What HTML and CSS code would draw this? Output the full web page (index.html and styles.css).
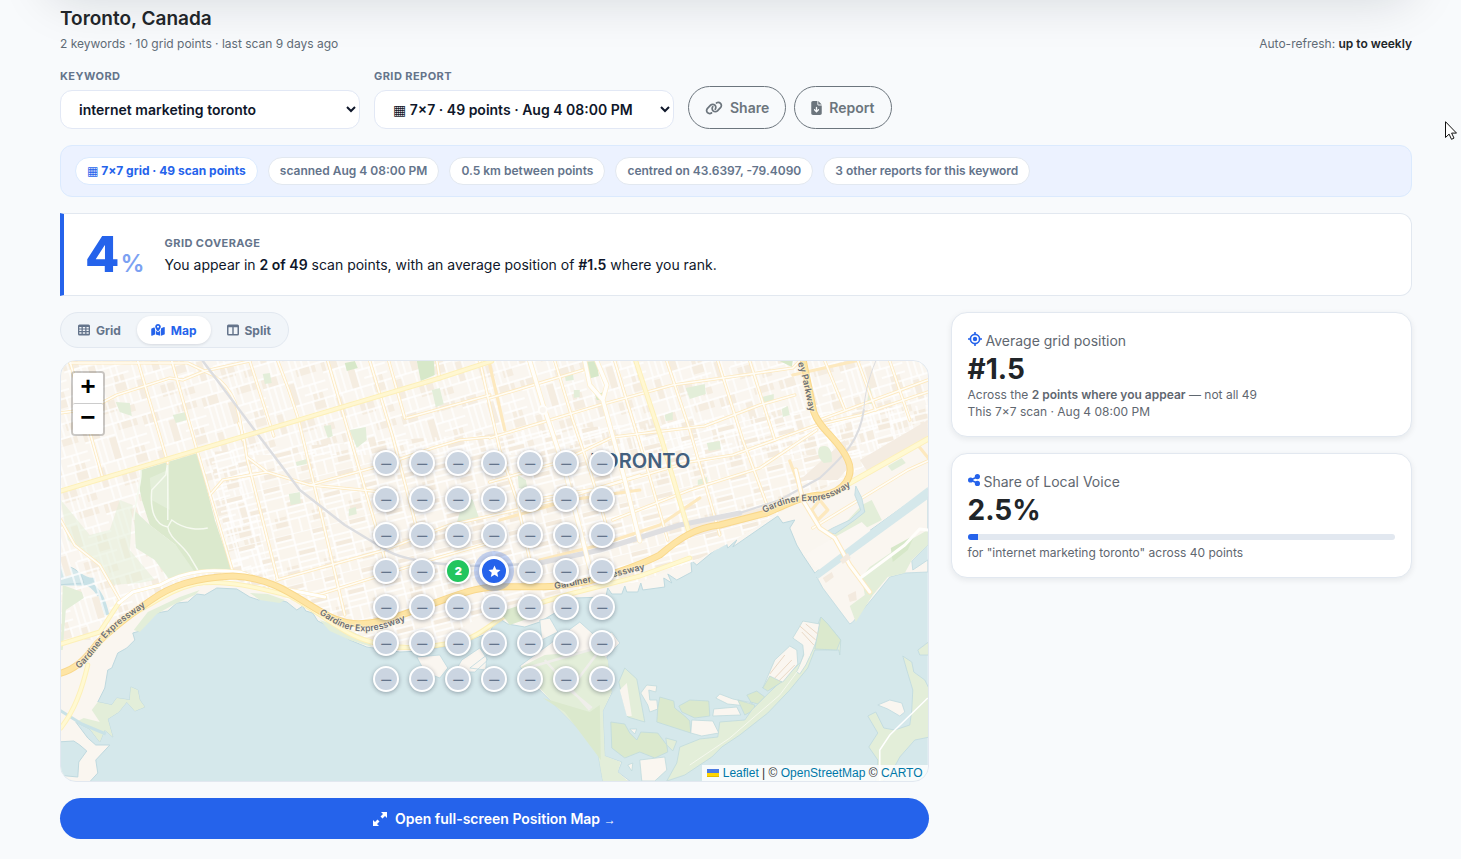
FILE: index.html
```html
<!DOCTYPE html>
<html lang="en">
<head>
<meta charset="utf-8">
<meta name="viewport" content="width=device-width, initial-scale=1">
<title>Toronto, Canada</title>
<link rel="stylesheet" href="styles.css">
</head>
<body>
<div class="topbar-shadow"></div>
<main class="page">
  <header class="heading">
    <div>
      <h1 class="title">Toronto, Canada</h1>
      <p class="meta">2 keywords · 10 grid points · last scan 9 days ago</p>
    </div>
    <p class="meta">Auto-refresh: <strong class="dark">up to weekly</strong></p>
  </header>

  <section class="filters">
    <div class="field">
      <label class="label" for="keyword">Keyword</label>
      <select class="select" id="keyword"><option>internet marketing toronto</option></select>
    </div>
    <div class="field">
      <label class="label" for="report">Grid report</label>
      <select class="select" id="report"><option>▦ 7×7 · 49 points · Aug 4 08:00 PM</option></select>
    </div>
    <div class="actions">
      <button class="btn-outline" type="button">
        <svg class="icon-link" viewBox="0 0 640 512" aria-hidden="true"><path d="M579.800 267.700c56.500-56.500 56.500-148 0-204.500c-50-50-128.800-56.500-186.300-15.400l-1.600 1.100c-14.400 10.300-17.700 30.300-7.400 44.600s30.300 17.700 44.600 7.400l1.600-1.100c32.100-22.900 76-19.300 103.800 8.600c31.500 31.500 31.500 82.500 0 114L422.300 334.800c-31.500 31.500-82.500 31.500-114 0c-27.900-27.900-31.500-71.800-8.600-103.800l1.100-1.600c10.300-14.400 6.900-34.400-7.400-44.600s-34.400-6.900-44.600 7.400l-1.100 1.600C206.500 251.200 213 330 263 380c56.500 56.500 148 56.500 204.500 0L579.800 267.700zM60.200 244.300c-56.500 56.500-56.500 148 0 204.500c50 50 128.800 56.500 186.300 15.400l1.600-1.100c14.400-10.300 17.700-30.300 7.400-44.600s-30.300-17.700-44.600-7.400l-1.600 1.100c-32.100 22.900-76 19.300-103.800-8.600C74 372 74 321 105.500 289.500L217.700 177.200c31.500-31.500 82.500-31.500 114 0c27.900 27.900 31.500 71.800 8.600 103.900l-1.100 1.600c-10.300 14.400-6.900 34.400 7.400 44.600s34.400 6.900 44.600-7.400l1.100-1.600C433.500 260.800 427 182 377 132c-56.500-56.500-148-56.500-204.500 0L60.200 244.300z"/></svg>
        Share
      </button>
      <button class="btn-outline" type="button">
        <svg class="icon-file" viewBox="0 0 384 512" aria-hidden="true"><path d="M64 0C28.700 0 0 28.700 0 64V448c0 35.300 28.700 64 64 64H320c35.300 0 64-28.700 64-64V160H256c-17.700 0-32-14.300-32-32V0H64zM256 0V128H384L256 0zM216 232V334.100l31-31c9.400-9.400 24.600-9.400 33.900 0s9.400 24.600 0 33.900l-72 72c-9.400 9.400-24.600 9.400-33.900 0l-72-72c-9.400-9.400-9.400-24.600 0-33.900s24.600-9.400 33.900 0l31 31V232c0-13.300 10.700-24 24-24s24 10.700 24 24z"/></svg>
        Report
      </button>
    </div>
  </section>

  <section class="facts">
    <span class="chip chip-main">▦ 7×7 grid · 49 scan points</span>
    <span class="chip">scanned Aug 4 08:00 PM</span>
    <span class="chip">0.5 km between points</span>
    <span class="chip">centred on 43.6397, -79.4090</span>
    <span class="chip">3 other reports for this keyword</span>
  </section>

  <section class="coverage">
    <div class="coverage-value">4<span class="coverage-unit">%</span></div>
    <div>
      <h2 class="label">Grid coverage</h2>
      <p class="coverage-text">You appear in <strong>2 of 49</strong> scan points, with an average position of <strong>#1.5</strong> where you rank.</p>
    </div>
  </section>

  <div class="columns">
    <section class="map-column">
      <div class="tabs">
        <button class="tab" type="button"><svg class="icon-tab" viewBox="0 0 12 12" aria-hidden="true"><path fill-rule="evenodd" d="M1.500.5h9A1.500 1.500 0 0 1 12 2v8a1.500 1.500 0 0 1-1.500 1.500h-9A1.500 1.500 0 0 1 0 10V2A1.500 1.500 0 0 1 1.500.5zM1.300 3v1.400h2.200V3zm3.500 0v1.400h2.400V3zm3.700 0v1.400h2.200V3zM1.300 5.600V7h2.200V5.600zm3.500 0V7h2.400V5.600zm3.700 0V7h2.200V5.600zM1.300 8.300v1.500h2.200V8.300zm3.500 0v1.500h2.400V8.300zm3.700 0v1.500h2.200V8.300z"/></svg>Grid</button>
        <button class="tab tab-active" type="button"><svg class="icon-map" viewBox="0 0 576 512" aria-hidden="true"><path fill-rule="evenodd" d="M408 120c0 54.600-73.100 151.900-105.200 192c-7.700 9.600-22 9.600-29.600 0C241.100 271.900 168 174.600 168 120C168 53.700 221.700 0 288 0s120 53.700 120 120zm8 80.400c3.500-6.900 6.700-13.800 9.600-20.600c.5-1.200 1-2.500 1.500-3.700l116-46.400C558.900 123.400 576 135 576 152V422.800c0 9.800-6 18.600-15.100 22.300L416 503V200.400zM137.600 138.300c2.400 14.100 7.200 28.300 12.800 41.500c2.900 6.800 6.100 13.700 9.600 20.600V451.800L32.900 502.700C17.100 509 0 497.400 0 480.400V209.600c0-9.800 6-18.600 15.100-22.300l122.600-49zM327.800 332c13.900-17.400 35.700-45.700 56.200-77V504.300L192 449.400V255c20.500 31.300 42.300 59.600 56.200 77c20.500 25.600 59.100 25.600 79.600 0zM288 160a44 44 0 1 0 0-88 44 44 0 1 0 0 88z"/></svg>Map</button>
        <button class="tab" type="button"><svg class="icon-tab" viewBox="0 0 12 12" aria-hidden="true"><path fill-rule="evenodd" d="M1.500.5h9A1.500 1.500 0 0 1 12 2v8a1.500 1.500 0 0 1-1.500 1.500h-9A1.500 1.500 0 0 1 0 10V2A1.500 1.500 0 0 1 1.500.5zM1.500 3.200V10h3.800V3.200zm5.200 0V10h3.800V3.200z"/></svg>Split</button>
      </div>

      <div class="map">
        <svg class="map-canvas" viewBox="61 361 867 420" preserveAspectRatio="xMidYMid slice" role="img" aria-label="Map of Toronto">
          <defs>
            <pattern id="blocks" width="62" height="74" patternUnits="userSpaceOnUse" patternTransform="translate(61 361) rotate(-16.600)">
              <path fill="#f5ede1" d="M0 2h18v9H0zM22 14h9v22h-9zM36 2h20v7H36zM4 40h8v20H4zM44 30h12v16H44zM26 52h14v12H26zM48 60h10v9H48z"/>
              <path stroke="#fff" stroke-width="1.300" fill="none" d="M0 1h62M0 12h31M31 20h31M0 37h62M20 49h42M0 61h62M38 29h24M5 1v36M11 12v25M17 1v36M23 12v25M32 0v74M39 1v19M45 20v17M51 1v36M57 37v24M4 37v24M12 37v37M19 49v25M26 37v12M44 37v37M38 61v13M51 49v25"/>
            </pattern>
            <pattern id="rows" width="38" height="50" patternUnits="userSpaceOnUse" patternTransform="translate(300 480) rotate(-14)">
              <path fill="#f4ebde" d="M0 0h16v5H0zM20 18h16v5H20zM4 32h12v12H4z"/>
              <path stroke="#fff" stroke-width="1.400" fill="none" d="M0 0h38M0 6h18M0 12h38M18 18h20M0 24h38M18 30h20M0 36h38M0 43h18M18 0v50M37 0v50M28 36v14M8 24v12"/>
            </pattern>
            <clipPath id="city"><path d="M61 361H928V430L850 475 800 500 735 540 697 560 640 582 573 590 490 610 447 638 400 648 355 634 297 603 237 580 177 590 145 610 100 640 61 640Z"/></clipPath>
            <path id="road-west" d="M79 669C95 655 100 643 112 632C125 619 137 614 152 601"/>
            <path id="road-mid" d="M319 614C333 622 340 629 357 631C375 633 390 627 418 616"/>
            <path id="road-centre" d="M555 589C580 585 615 577 655 567"/>
            <path id="road-east" d="M764 513C785 503 795 501 810 501C828 501 840 494 860 480"/>
            <path id="road-north" d="M798 363C804 380 805 392 812 422"/>
          </defs>

          <rect x="61" y="361" width="867" height="420" fill="#d5e8eb"/>

          <!-- mainland -->
          <path fill="#faf6f0" stroke="#bfd9df" stroke-width="1" d="M55 355H935V484L868 532 815 573 803 555 797 545 790 528 795 520 783 523 778 516 733 547 737 540 728 548 726 541 697 565 691 560 692 572 677 580 668 574 672 583 664 578 665 587 643 590 641 583 638 592 627 592 625 586 622 594 612 594 608 588 606 597 575 598 560 610 540 622 525 627 508 624 497 617 490 633 470 640 447 646 420 651 400 652 367 647 350 640 333 628 318 621 313 613 306 611 303 606 297 610 287 602 276 599 267 596 259 600 250 597 237 589 217 588 205 595 197 594 188 602 177 603 168 611 157 613 145 623 140 631 133 633 135 640 127 648 118 653 112 668 108 670 105 688 98 702 112 705 117 698 130 700 131 687 138 690 140 700 145 707 135 711 127 702 119 712 108 719 113 737 105 730 100 742 90 729 76 722 88 738 96 745 110 745 96 760 98 773 87 785H55Z"/>
          <path fill="#e3eed9" d="M98 702L112 705 117 698 130 700 131 687 138 690 140 700 145 707 135 711 127 702 119 712 108 719 113 737 105 730 100 742 90 729 76 722 84 718 100 722 92 710Z"/>
          <path fill="#d5e8eb" stroke="#bfd9df" d="M57 742L74 741 80 745 87 751 79 762 78 777 57 775Z"/>
          <path fill="none" stroke="#c9e2e7" stroke-width="5" d="M58 570C75 564 80 582 95 580M58 583H88C100 590 104 602 107 615"/>
          <path fill="none" stroke="#c9e2e7" stroke-width="3" d="M58 709L82 724 106 734"/>
          <path fill="#d5e8eb" stroke="#bfd9df" d="M57 567C70 563 82 571 84 583L57 585Z"/>

          <!-- street texture -->
          <g clip-path="url(#city)">
            <rect x="61" y="361" width="867" height="290" fill="url(#blocks)"/>
            <path fill="#faf5ed" d="M245 455L930 455V650H285Z"/>
            <path fill="url(#rows)" d="M210 452L930 405V650H285L233 575Z"/>
          </g>
          <path fill="#f4ece2" d="M860 460L928 420V440L870 475ZM690 538L760 518 765 507 690 525ZM800 480L845 440 850 466 838 480Z"/>

          <!-- parks -->
          <g fill="#e3eed9">
            <path d="M61 500L68 540 95 560 110 585 140 583 155 580 130 550 133 505 120 500 110 530 90 535Z" opacity=".55"/>
            <path d="M116 402L130 403 132 416 120 412ZM173 415L186 412 187 420 176 423ZM263 374L270 373 272 383 265 384ZM324 426L331 425 333 436 328 438ZM350 430L366 427 367 440 357 448ZM432 390L440 388 444 404 436 407ZM289 494L300 492 301 503 291 505ZM296 462L307 459 307 464 297 466ZM349 509L356 507 357 514 349 516Z"/>
            <path d="M686 388L705 384 706 394 690 399ZM762 397L774 394 774 402 763 403ZM782 409L788 406 790 415 783 417ZM565 375L573 373 574 380 566 381ZM574 390L580 390 580 397 574 398ZM665 415L673 412 673 420 666 421ZM707 443L720 441 721 449 709 451ZM698 480L707 477 708 483 698 485ZM465 495L473 500 480 520 457 523ZM518 475L526 480 528 490 519 488ZM870 385L874 404 867 404ZM820 447C830 443 833 452 832 462L824 463C818 458 817 452 820 447ZM888 466L902 458 906 463 892 471Z"/>
            <path d="M63 585L82 592 84 598 66 610 63 650 61 650ZM148 612L165 604 180 597 200 590 195 595 175 604 157 614 140 632 134 630ZM250 593L268 594 285 600 280 603 260 600ZM320 620L345 628 370 640 372 647 350 640 330 631Z"/>
            <path d="M862 505L872 500 882 520 862 530 848 540 830 540Z"/>
          </g>
          <path fill="#dbe9cd" d="M141 470L198 453 215 520 232 570 210 572 190 572 176 545 150 525 142 500 140 490Z"/>
          <path fill="#e3eed9" d="M134 510L150 525 176 545 195 572 170 580 155 560 136 548ZM150 478L168 470 170 510 152 500Z"/>
          <path fill="none" stroke="#f6faf0" stroke-width="1.500" d="M168 462L166 475 152 490C150 510 155 525 168 527L172 520C185 530 200 530 208 528M168 463V520M168 527C170 540 185 545 192 560L198 570M141 470C143 480 135 500 134 520"/>
          <path fill="#d7e8c9" d="M345 363L355 361 358 368 347 371ZM417 361H434L435 375 421 381ZM585 362L597 361 599 376 588 379ZM595 394L605 392 602 400 597 400ZM780 361H793L792 367Z"/>

          <!-- local arterials -->
          <g fill="none" stroke-linecap="round" stroke-linejoin="round">
            <g stroke="#fde9bf" stroke-width="3.200">
              <path d="M70 361L103 478M138 361L168 463M172 361L198 453 233 572M250 361L274 436M239 423C247 440 245 455 249 465L278 580M278 361L289 390 298 417 322 517 345 615M328 361L354 450 380 540 385 560M370 361L393 437 420 540M389 361L405 418M437 361L440 379M480 361L500 450 517 500 530 560M490 365L505 430M555 361L573 420 590 470 608 530M615 361L645 460 668 540M667 361L690 430 720 535M718 361L743 440 768 507M750 361L775 440M790 461L803 495M825 361L845 410M858 361L876 410M890 361L910 420M930 460L918 445"/>
              <path d="M61 413L90 409 117 395 170 378 183 380 205 371 250 361M70 363H188L213 375C235 390 240 410 243 440M247 457L267 472 310 485 383 492M210 495L223 480 267 472M310 485L383 465 433 448 460 440 490 437M407 418L490 395M61 520L75 545 100 565 120 600M277 580L385 550 450 525 560 500 640 475M318 595L350 585 430 560 500 540M490 398L583 370M490 438L600 405 673 385 793 368 800 361M490 482L560 462 613 437 705 426 760 405 795 395M533 500L600 488 690 462 733 455 817 425 860 415 928 392M613 520L690 490 760 468 817 430M793 375L860 360M820 420L928 380M850 482L928 440M500 520L570 500 640 490M540 560L600 545 660 525 700 498"/>
              <path d="M813 528L908 470 930 460M820 500L828 510 818 520 812 510ZM862 580L905 540 920 528 928 529"/>
            </g>
            <g stroke="#fffdf7" stroke-width="1.700">
              <path d="M70 361L103 478M138 361L168 463M172 361L198 453 233 572M250 361L274 436M239 423C247 440 245 455 249 465L278 580M278 361L289 390 298 417 322 517 345 615M328 361L354 450 380 540 385 560M370 361L393 437 420 540M389 361L405 418M437 361L440 379M480 361L500 450 517 500 530 560M555 361L573 420 590 470 608 530M615 361L645 460 668 540M667 361L690 430 720 535M718 361L743 440 768 507M750 361L775 440M825 361L845 410M858 361L876 410M890 361L910 420"/>
              <path d="M61 413L90 409 117 395 170 378 183 380 205 371 250 361M70 363H188L213 375C235 390 240 410 243 440M247 457L267 472 310 485 383 492M210 495L223 480 267 472M310 485L383 465 433 448 460 440 490 437M407 418L490 395M61 520L75 545 100 565 120 600M277 580L385 550 450 525 560 500 640 475M318 595L350 585 430 560 500 540M490 398L583 370M490 438L600 405 673 385 793 368 800 361M490 482L560 462 613 437 705 426 760 405 795 395M533 500L600 488 690 462 733 455 817 425 860 415 928 392M613 520L690 490 760 468 817 430M820 420L928 380M813 528L908 470 930 460M862 580L905 540 920 528 928 529"/>
            </g>

            <!-- railway -->
            <path stroke="#dcdde0" stroke-width="2.500" d="M203 361L257 433 300 490 345 525 383 548C400 560 440 566 490 566L540 563"/>
            <path stroke="#dfdfe1" stroke-width="5" d="M540 563L600 550 680 525 740 513"/>
            <path stroke="#dcdde0" stroke-width="2" d="M740 513L780 500 820 478C845 455 860 440 864 410"/>
            <path stroke="#dcdde0" stroke-width="1" d="M864 410C865 395 868 380 876 361"/>

            <!-- wide avenues -->
            <path stroke="#fdeecb" stroke-width="5" d="M530 361L543 404 565 470 590 568M585 361L590 385 603 400 625 480 640 541M603 400L607 385 597 361"/>
            <path stroke="#fffefb" stroke-width="3.500" d="M530 361L543 404 565 470 590 568M585 361L590 385 603 400 625 480 640 541M603 400L607 385 597 361"/>
            <circle cx="543" cy="410" r="4" fill="#faf6f0" stroke="#fffefb" stroke-width="2"/>
            <path stroke="#fdf0b9" stroke-width="5" d="M61 491L198 450 440 378 492 361M636 361L662 440 690 535"/>
            <path stroke="#fff7d2" stroke-width="3" d="M61 491L198 450 440 378 492 361M636 361L662 440 690 535"/>
            <path stroke="#fdf0b9" stroke-width="6" d="M850 483L928 439"/>
            <path stroke="#fff9d2" stroke-width="4" d="M850 483L928 439"/>
            <path stroke="#fdf0b9" stroke-width="5" d="M61 644L100 632 119 603M61 728C75 710 82 690 88 665M125 618C155 603 170 590 195 584C225 579 260 588 290 596C320 612 340 632 365 640C400 652 430 648 465 640C490 632 500 610 540 603L570 594 640 576 690 558"/>
            <path stroke="#fff9d2" stroke-width="3" d="M61 644L100 632 119 603M61 728C75 710 82 690 88 665M125 618C155 603 170 590 195 584C225 579 260 588 290 596C320 612 340 632 365 640C400 652 430 648 465 640C490 632 500 610 540 603L570 594 640 576 690 558"/>
            <path stroke="#fdedc0" stroke-width="4" d="M119 603L133 592 160 585C190 568 215 570 240 572L290 590 325 597"/>
            <path stroke="#fff" stroke-width="3" d="M119 603L133 592 160 585C190 568 215 570 240 572L290 590 325 597"/>

            <!-- expressway -->
            <path stroke="#f9d88c" stroke-width="7" d="M58 674C75 670 85 660 97 644C112 628 130 615 150 601C172 585 195 578 233 576C275 578 295 597 320 611C340 624 360 631 410 612C450 598 470 588 495 587C530 586 560 590 600 578C625 570 645 563 660 555C680 538 695 528 720 525L767 513C790 503 805 495 823 495C845 492 855 475 848 460C840 440 820 430 814 412L803 358"/>
            <path stroke="#fee5a5" stroke-width="5" d="M58 674C75 670 85 660 97 644C112 628 130 615 150 601C172 585 195 578 233 576C275 578 295 597 320 611C340 624 360 631 410 612C450 598 470 588 495 587C530 586 560 590 600 578C625 570 645 563 660 555C680 538 695 528 720 525L767 513C790 503 805 495 823 495C845 492 855 475 848 460C840 440 820 430 814 412L803 358"/>
          </g>

          <!-- port lands -->
          <g stroke="#bfd9df" stroke-width=".8">
            <path fill="#d5e8eb" d="M856 486L862 498 865 512 855 520 835 534 826 532 833 528 850 520 861 510 855 495Z"/>
            <path fill="#faf6f0" d="M928 497L890 520 817 577 823 588 850 624 853 622 862 611 873 598 890 577 905 573 928 572 928 560 913 570 912 561 928 545Z"/>
          </g>
          <path fill="#fbf7f2" d="M806 554L828 541 862 522 872 532 820 570 814 566Z"/>
          <path fill="#e3eed9" d="M862 577L870 567 905 543 928 530V545L912 560 905 573 888 577 873 595 856 622 850 606 865 595Z"/>
          <path fill="#d7e8c9" d="M891 548L915 535 908 550 893 562Z"/>
          <path fill="#d5e8eb" d="M928 487L815 573 818 579 928 499Z"/>
          <path fill="none" stroke="#fde9bf" stroke-width="5" stroke-linecap="round" stroke-linejoin="round" d="M796 470L803 500 820 528 835 538 850 565 870 592"/>
          <path fill="none" stroke="#fffefb" stroke-width="3" stroke-linecap="round" stroke-linejoin="round" d="M796 470L803 500 820 528 835 538 850 565 870 592M862 577L905 545 920 529 928 530"/>
          <path fill="#f3eadf" d="M823 578L832 572 834 577 826 583ZM848 595L856 591 857 600 850 602ZM840 560L848 553 851 558 843 564Z"/>

          <!-- waterfront piers and Ontario Place -->
          <path fill="#faf6f0" stroke="#bfd9df" stroke-width=".8" d="M540 620L550 618 558 632 542 640ZM520 666L580 622 600 640 612 632 620 643 607 657 612 693 603 711 605 756 622 762 618 772 630 781H603L598 752 580 730 557 707 530 680ZM417 657L440 655 448 668 440 678 425 672ZM462 660L480 648 488 660 475 672 455 672ZM470 668L487 655 486 670ZM448 672L460 676 452 683Z"/>
          <path fill="#e3eed9" d="M521 667L545 655 600 650 608 660 612 692 603 711 605 756 621 762 618 772 628 781H603L598 752 580 730 557 707Z"/>
          <path fill="#dbe9cd" d="M543 698L590 712 600 705 601 760 565 712ZM500 612L518 606 530 618 510 625Z"/>
          <path fill="none" stroke="#efeeea" stroke-width="2.500" d="M524 669L607 645M545 660L590 710M600 650L570 690 592 708"/>

          <!-- Toronto Islands -->
          <g stroke="#c0dadd" stroke-width=".8">
            <path fill="#e3eed9" d="M625 668L637 679 640 695 645 722 628 717 622 695 619 682Z"/>
            <path fill="#f9f5ee" stroke="none" d="M620 690L627 683 632 716 627 716Z"/>
            <path fill="#f9f5ee" d="M641 693L647 685 657 686 656 692 649 690 650 700 657 700 658 709 650 712 648 705Z"/>
            <path fill="#dbe9cd" d="M660 697L674 701 675 708 685 716 690 721 691 733 657 722 658 708Z"/>
            <path fill="#dbe9cd" d="M679 706L690 700 709 701 710 716 695 718 682 712Z"/>
            <path fill="#faf6f0" d="M716 698L720 694 733 699 753 703 747 706 728 704ZM714 709L737 707 741 715 713 716Z"/>
            <path fill="#dbe9cd" d="M747 695L757 691 765 697 758 704 751 702ZM738 700L755 705 754 710 745 715Z"/>
            <path fill="#dbe9cd" d="M611 722L625 724 630 733 637 740 641 732 658 733 667 745 668 752 655 758 640 752 625 758 612 748Z"/>
            <path fill="#e3eed9" d="M667 781L677 763 680 747 700 739 718 737 720 722 745 720 752 710 770 692 788 675 802 661 806 645 815 632 821 617 828 624 841 640 840 655 839 650 815 650 808 668 790 690 768 713 740 735 722 747 712 757 700 765 685 775Z"/>
            <path fill="#faf6f0" d="M799 628L803 621 820 624 817 640 813 650 806 665 800 674 797 672 804 655 803 645 793 638Z"/>
            <path fill="#faf6f0" d="M790 646L797 650 798 664 783 682 770 678 763 688 775 660Z"/>
            <path fill="#dbe9cd" d="M821 617L828 624 841 640 837 650 815 649ZM763 688L770 676 782 682 768 691Z"/>
            <path fill="#faf6f0" d="M640 760L665 757 667 770 655 781H642ZM628 765L633 763 632 771ZM692 720L713 721 719 733 702 736 691 733ZM630 729L637 729 635 734Z"/>
            <path fill="#e3eed9" d="M666 738L677 741 673 751 667 745Z"/>
          </g>
          <path fill="none" stroke="#ead9c6" stroke-width="1" d="M770 674L785 655M775 678L792 660M779 681L795 665M800 626L816 640M802 632L814 645M806 624L818 634"/>
          <path fill="none" stroke="#f5f8ee" stroke-width="1" d="M690 765L730 738 780 695 810 655"/>

          <!-- Leslie Street Spit -->
          <path fill="#e3eed9" stroke="#bfd9df" stroke-width=".8" d="M930 641L918 650 920 655 930 655ZM903 656L912 662 914 672 925 680 930 690V737L915 740 900 757 893 770 880 785 876 781 878 760 869 747 878 733 868 716 876 712 884 728 895 730 910 725 912 710 913 690 907 670Z"/>
          <path fill="#faf6f0" stroke="#bfd9df" stroke-width=".8" d="M878 705L890 700 902 703 905 712 900 716 888 709Z"/>
          <path fill="none" stroke="#fff" stroke-width="1.500" d="M928 698L890 735 880 750V781"/>

          <g class="road-name">
            <text><textPath href="#road-west">Gardiner Expressway</textPath></text>
            <text><textPath href="#road-mid">Gardiner Expressway</textPath></text>
            <text><textPath href="#road-centre">Gardiner Expressway</textPath></text>
            <text><textPath href="#road-east">Gardiner Expressway</textPath></text>
            <text><textPath href="#road-north">ey Parkway</textPath></text>
          </g>
          <text class="city-name" x="591" y="468">TORONTO</text>
        </svg>

        <div class="pins">
          <span class="pin">—</span><span class="pin">—</span><span class="pin">—</span><span class="pin">—</span><span class="pin">—</span><span class="pin">—</span><span class="pin">—</span>
          <span class="pin">—</span><span class="pin">—</span><span class="pin">—</span><span class="pin">—</span><span class="pin">—</span><span class="pin">—</span><span class="pin">—</span>
          <span class="pin">—</span><span class="pin">—</span><span class="pin">—</span><span class="pin">—</span><span class="pin">—</span><span class="pin">—</span><span class="pin">—</span>
          <span class="pin">—</span><span class="pin">—</span><span class="pin pin-ranked">2</span><span class="pin pin-home"><svg class="icon-star" viewBox="0 0 24 24" aria-hidden="true"><path d="M12 1l3.200 7.300 7.800.8-5.900 5.300 1.700 7.800L12 18.200l-6.800 4 1.700-7.800L1 9.100l7.800-.8z"/></svg></span><span class="pin">—</span><span class="pin">—</span><span class="pin">—</span>
          <span class="pin">—</span><span class="pin">—</span><span class="pin">—</span><span class="pin">—</span><span class="pin">—</span><span class="pin">—</span><span class="pin">—</span>
          <span class="pin">—</span><span class="pin">—</span><span class="pin">—</span><span class="pin">—</span><span class="pin">—</span><span class="pin">—</span><span class="pin">—</span>
          <span class="pin">—</span><span class="pin">—</span><span class="pin">—</span><span class="pin">—</span><span class="pin">—</span><span class="pin">—</span><span class="pin">—</span>
        </div>

        <div class="zoom">
          <button class="zoom-btn" type="button" aria-label="Zoom in">+</button>
          <button class="zoom-btn" type="button" aria-label="Zoom out">−</button>
        </div>

        <div class="credit">
          <a href="#leaflet"><svg class="icon-flag" viewBox="0 0 12 8" aria-hidden="true"><path fill="#4c7be1" d="M0 0h12v4H0z"/><path fill="#ffd500" d="M0 4h12v3H0z"/><path fill="#e0bc00" d="M0 7h12v1H0z"/></svg> Leaflet</a> | © <a href="#osm">OpenStreetMap</a> © <a href="#carto">CARTO</a>
        </div>
      </div>

      <a class="open-map" href="#position-map">
        <svg class="icon-expand" viewBox="0 0 14 14" aria-hidden="true"><path d="M8 0h6v6l-2-2-2.500 2.500-2-2L10 2zM6 14H0V8l2 2 2.500-2.500 2 2L4 12z"/></svg>
        <span>Open full-screen Position Map <span class="arrow">→</span></span>
      </a>
    </section>

    <aside class="stats">
      <section class="card">
        <h3 class="card-title"><svg class="icon-stat" viewBox="0 0 14 14" aria-hidden="true"><circle cx="7" cy="7" r="4.600" fill="none" stroke="currentColor" stroke-width="1.700"/><circle cx="7" cy="7" r="2.200"/><path d="M6.200 0h1.600v3H6.200zM6.200 11h1.600v3H6.200zM0 6.200h3v1.600H0zM11 6.200h3v1.600h-3z"/></svg> Average grid position</h3>
        <div class="card-value">#1.5</div>
        <p class="card-note">Across the <strong>2 points where you appear</strong> — not all 49</p>
        <p class="card-note">This 7×7 scan · Aug 4 08:00 PM</p>
      </section>
      <section class="card">
        <h3 class="card-title"><svg class="icon-share" viewBox="0 0 12 12" aria-hidden="true"><path d="M2.700 6l6.800-3.300M2.700 6l6.800 3.300" stroke="currentColor" stroke-width="1.600"/><circle cx="2.600" cy="6" r="2.600"/><circle cx="9.400" cy="2.600" r="2.600"/><circle cx="9.400" cy="9.400" r="2.600"/></svg> Share of Local Voice</h3>
        <div class="card-value">2.5%</div>
        <div class="bar"><div class="bar-fill" style="width:2.500%"></div></div>
        <p class="card-note">for "internet marketing toronto" across 40 points</p>
      </section>
    </aside>
  </div>
</main>
<svg class="cursor" viewBox="0 0 12 19" aria-hidden="true"><path d="M.5.700v15.800l3.600-3.400 2.400 5.200 2.500-1.200-2.400-5h4.900z" fill="#fff" stroke="#111" stroke-width="1"/></svg>
</body>
</html>
```

FILE: styles.css
```css
* {
  box-sizing: border-box;
}

body {
  margin: 0;
  background: #f8fafc;
  color: #212529;
  font-family: Inter, "DejaVu Sans", sans-serif;
  font-size: 14px;
}

h1, h2, h3, p {
  margin: 0;
}

strong {
  font-weight: 600;
}

svg {
  fill: currentColor;
  flex: none;
}

button {
  font-family: inherit;
  cursor: pointer;
}

.topbar-shadow {
  position: absolute;
  top: -80px;
  left: 48px;
  right: 48px;
  height: 70px;
  border-radius: 24px;
  box-shadow: 0 10px 50px rgba(15, 20, 36, 0.15);
}

.page {
  position: relative;
  padding: 6px 49px 20px 60px;
}

.heading {
  display: flex;
  justify-content: space-between;
  align-items: flex-end;
}

.title {
  font-size: 19px;
  font-weight: 600;
  line-height: 26px;
}

.meta {
  margin-top: 3px;
  color: #5f6b76;
  font-size: 12px;
  line-height: 18px;
}

.dark {
  color: #212529;
}

.label {
  display: block;
  color: #64748b;
  font-size: 11px;
  font-weight: 700;
  line-height: 16px;
  letter-spacing: 0.04em;
  text-transform: uppercase;
}

.filters {
  display: flex;
  flex-wrap: wrap;
  align-items: flex-end;
  gap: 14px;
  margin-top: 15px;
}

.field {
  width: 300px;
}

.select {
  width: 100%;
  height: 39px;
  margin-top: 6px;
  padding: 0 0 0 14px;
  border: 1px solid #e2e8f5;
  border-radius: 12px;
  background-color: #fff;
  color: #0f172a;
  font: 600 14px Inter, "DejaVu Sans", sans-serif;
}

.actions {
  display: flex;
  gap: 8px;
}

.btn-outline {
  display: flex;
  align-items: center;
  gap: 7px;
  height: 43px;
  padding: 0 16px;
  border: 1px solid #6c757d;
  border-radius: 22px;
  background: none;
  color: #6c757d;
  font-size: 14px;
  font-weight: 600;
}

.icon-link {
  width: 18px;
  height: 14px;
}

.icon-file {
  width: 11px;
  height: 14px;
}

.facts {
  display: flex;
  flex-wrap: wrap;
  gap: 10px;
  margin-top: 16px;
  padding: 11px 14px;
  border: 1px solid #dbeafe;
  border-radius: 12px;
  background: #ecf2ff;
}

.chip {
  padding: 5px 11px;
  border: 1px solid #e2e8f0;
  border-radius: 14px;
  background: #fff;
  color: #64748b;
  font-size: 12px;
  font-weight: 600;
  line-height: 16px;
}

.chip-main {
  border-color: #dbeafe;
  color: #2563eb;
  font-weight: 700;
}

.coverage {
  display: flex;
  align-items: center;
  gap: 20px;
  margin-top: 16px;
  padding: 16px 21px;
  border: 1px solid #e2e8f0;
  border-left: 4px solid #2563eb;
  border-radius: 0 12px 12px 0;
  background: #fff;
}

.coverage-value {
  display: flex;
  align-items: baseline;
  gap: 1px;
  height: 49px;
  color: #2563eb;
  font-size: 50px;
  font-weight: 800;
  line-height: 49px;
}

.coverage-unit {
  font-size: 24px;
  font-weight: 600;
  opacity: 0.6;
}

.coverage-text {
  margin-top: 4px;
  color: #0f172a;
  font-size: 14px;
  line-height: 20px;
}

.columns {
  display: grid;
  grid-template-columns: minmax(0, 32fr) minmax(0, 17fr);
  gap: 22px;
  margin-top: 16px;
}

.tabs {
  display: inline-flex;
  gap: 2px;
  padding: 3px;
  border: 1px solid #e2e8f0;
  border-radius: 18px;
  background: #f1f5f9;
  vertical-align: top;
}

.tab {
  display: flex;
  align-items: center;
  gap: 6px;
  height: 28px;
  padding: 0 14px;
  border: 0;
  border-radius: 14px;
  background: none;
  color: #64748b;
  font-size: 12px;
  font-weight: 700;
}

.tab-active {
  background: #fff;
  color: #2563eb;
  box-shadow: 0 1px 3px rgba(15, 23, 42, 0.12);
}

.icon-tab {
  width: 12px;
  height: 12px;
}

.icon-map {
  width: 14px;
  height: 12px;
}

.map {
  position: relative;
  display: grid;
  place-items: center;
  height: 422px;
  margin-top: 12px;
  border: 1px solid #e2e8f0;
  border-radius: 16px;
  overflow: hidden;
}

.map-canvas {
  grid-area: 1 / 1;
  width: 100%;
  height: 420px;
}

.road-name {
  fill: #6d7076;
  stroke: #fdf3d8;
  stroke-width: 2px;
  stroke-opacity: 0.5;
  paint-order: stroke;
  font: 600 9px Inter, sans-serif;
}

.city-name {
  fill: #43607f;
  font: 600 20px Inter, sans-serif;
}

.pins {
  grid-area: 1 / 1;
  display: grid;
  grid-template-columns: repeat(7, 36px);
  grid-auto-rows: 36px;
  place-items: center;
  z-index: 1;
}

.pin {
  display: flex;
  align-items: center;
  justify-content: center;
  width: 26px;
  height: 26px;
  border: 2px solid #fff;
  border-radius: 50%;
  background: #cbd5e1;
  color: #64748b;
  font-size: 10px;
  font-weight: 700;
  line-height: 12px;
  box-shadow: 0 1px 4px rgba(15, 23, 42, 0.35);
}

.pin-ranked {
  background: #22c55e;
  color: #fff;
  font-size: 11px;
  font-weight: 900;
}

.pin-home {
  width: 30px;
  height: 30px;
  border-width: 3px;
  background: #2563eb;
  color: #fff;
  box-shadow: 0 0 0 5px rgba(37, 99, 235, 0.25), 0 2px 6px rgba(15, 23, 42, 0.4);
}

.icon-star {
  width: 13px;
  height: 13px;
}

.zoom {
  position: absolute;
  top: 10px;
  left: 10px;
  z-index: 2;
  border: 2px solid rgba(0, 0, 0, 0.2);
  border-radius: 4px;
  background-clip: padding-box;
}

.zoom-btn {
  display: block;
  width: 30px;
  height: 30px;
  padding: 0;
  border: 0;
  border-radius: 2px;
  background: #fff;
  color: #000;
  font: bold 26px/30px "Liberation Mono", monospace;
}

.zoom-btn + .zoom-btn {
  height: 31px;
  border-top: 1px solid #ccc;
}

.credit {
  position: absolute;
  right: 0;
  bottom: 0;
  z-index: 2;
  padding: 0 5px;
  background: rgba(255, 255, 255, 0.8);
  color: #333;
  font: 12px/16px "Liberation Sans", Arial, sans-serif;
}

.credit a {
  color: #0078a8;
  text-decoration: none;
}

.icon-flag {
  width: 12px;
  height: 8px;
}

.open-map {
  display: flex;
  align-items: center;
  justify-content: center;
  gap: 8px;
  height: 41px;
  margin-top: 16px;
  border-radius: 21px;
  background: #2563eb;
  color: #fff;
  font-size: 14px;
  font-weight: 600;
  text-decoration: none;
}

.icon-expand {
  width: 14px;
  height: 14px;
}

.arrow {
  font: 400 12px "Liberation Sans", sans-serif;
}

.stats {
  display: flex;
  flex-direction: column;
  gap: 16px;
}

.card {
  padding: 16px;
  border: 1px solid #e2e8f0;
  border-radius: 16px;
  background: #fff;
  box-shadow: 0 2px 6px rgba(15, 23, 42, 0.08);
}

.card-title {
  color: #5f6770;
  font-size: 14px;
  font-weight: 400;
  line-height: 23px;
}

.icon-stat {
  width: 14px;
  height: 14px;
  color: #2563eb;
}

.icon-share {
  width: 12px;
  height: 12px;
  color: #2563eb;
  vertical-align: 1px;
}

.card-value {
  font-size: 28px;
  font-weight: 700;
  line-height: 34px;
}

.card-note {
  color: #5f6770;
  font-size: 12px;
  line-height: 17px;
}

.bar {
  height: 6px;
  margin: 7px 0 4px;
  border-radius: 3px;
  background: #e2e8f0;
  overflow: hidden;
}

.bar-fill {
  height: 100%;
  background: #2563eb;
}

.cursor {
  position: absolute;
  top: 121px;
  left: 1445px;
  width: 12px;
  height: 19px;
}
```
